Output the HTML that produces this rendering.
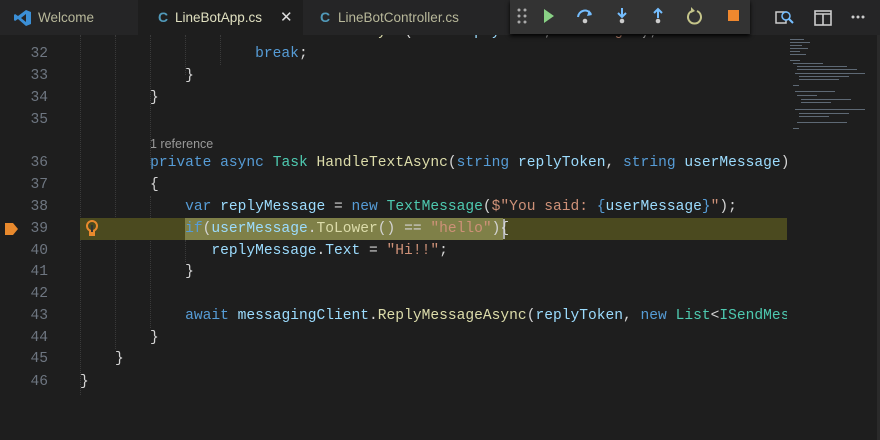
<!DOCTYPE html>
<html><head><meta charset="utf-8"><style>
body{margin:0;width:880px;height:440px;background:#1e1e1e;overflow:hidden;position:relative;font-family:"Liberation Mono",monospace;}
.tabs{position:absolute;left:0;top:0;width:880px;height:35px;background:#252526;}
.tab{position:absolute;top:0;height:35px;line-height:35px;font-family:"Liberation Sans",sans-serif;font-size:13.5px;color:#b8b89a;}
.code{position:absolute;left:0;top:0;width:787px;height:440px;overflow:hidden;}
.ln{position:absolute;left:0;width:48px;text-align:right;font-size:14.6px;color:#6e7681;}
.l{position:absolute;left:80px;white-space:pre;font-size:14.6px;color:#d4d4d4;height:22px;line-height:22px;}
.k{color:#569cd6}.t{color:#4ec9b0}.m{color:#dcdcaa}.v{color:#9cdcfe}.s{color:#ce9178}
.g{position:absolute;top:35px;width:0;height:360px;border-left:1px dotted #3a3a3a;}
</style></head><body>
<div class="code">
<div class="g" style="left:80px"></div><div class="g" style="left:115px;height:314px"></div><div class="g" style="left:150px;top:35px;height:130px"></div><div class="g" style="left:150px;top:196px;height:132px"></div><div class="g" style="left:185px;top:35px;height:40px"></div><div class="g" style="left:185px;top:240px;height:22px"></div><div class="g" style="left:220px;top:35px;height:30px"></div>
<div style="position:absolute;left:80px;top:218px;width:707px;height:22px;background:#4b4a1f"></div>
<div style="position:absolute;left:185px;top:218px;width:318px;height:22px;background:#7f8048"></div>
<div style="position:absolute;left:503px;top:219px;width:2px;height:20px;background:#aeafad"></div>
<div class="l" style="top:21px">                <span class="k">await</span> <span class="m">HandleTextAsync</span>(<span class="v">eventReplyToken</span>, <span class="s">"message"</span>);</div>
<div class="ln" style="top:43px;line-height:22px">32</div><div class="l" style="top:43px">                    <span class="k">break</span>;</div>
<div class="ln" style="top:65px;line-height:22px">33</div><div class="l" style="top:65px">            }</div>
<div class="ln" style="top:87px;line-height:22px">34</div><div class="l" style="top:87px">        }</div>
<div class="ln" style="top:109px;line-height:22px">35</div>
<div class="l" style="top:134px;font-family:'Liberation Sans',sans-serif;font-size:12.5px;color:#999;left:150px;height:20px;line-height:20px">1 reference</div>
<div class="ln" style="top:152px;line-height:22px">36</div><div class="l" style="top:152px">        <span class="k">private</span> <span class="k">async</span> <span class="t">Task</span> <span class="m">HandleTextAsync</span>(<span class="k">string</span> <span class="v">replyToken</span>, <span class="k">string</span> <span class="v">userMessage</span>)</div>
<div class="ln" style="top:174px;line-height:22px">37</div><div class="l" style="top:174px">        {</div>
<div class="ln" style="top:196px;line-height:22px">38</div><div class="l" style="top:196px">            <span class="k">var</span> <span class="v">replyMessage</span> = <span class="k">new</span> <span class="t">TextMessage</span>(<span class="s">$"You said: </span><span class="k">{</span><span class="v">userMessage</span><span class="k">}</span><span class="s">"</span>);</div>
<div class="ln" style="top:218px;line-height:22px">39</div><div class="l" style="top:218px">            <span class="k">if</span>(<span class="v">userMessage</span>.<span class="m">ToLower</span>() == <span class="s">"hello"</span>){</div>
<div class="ln" style="top:240px;line-height:22px">40</div><div class="l" style="top:240px">               <span class="v">replyMessage</span>.<span class="v">Text</span> = <span class="s">"Hi!!"</span>;</div>
<div class="ln" style="top:261px;line-height:22px">41</div><div class="l" style="top:261px">            }</div>
<div class="ln" style="top:283px;line-height:22px">42</div>
<div class="ln" style="top:305px;line-height:22px">43</div><div class="l" style="top:305px">            <span class="k">await</span> <span class="v">messagingClient</span>.<span class="m">ReplyMessageAsync</span>(<span class="v">replyToken</span>, <span class="k">new</span> <span class="t">List</span>&lt;<span class="t">ISendMessage</span>&gt;</div>
<div class="ln" style="top:327px;line-height:22px">44</div><div class="l" style="top:327px">        }</div>
<div class="ln" style="top:348px;line-height:22px">45</div><div class="l" style="top:348px">    }</div>
<div class="ln" style="top:371px;line-height:22px">46</div><div class="l" style="top:371px">}</div>
<svg style="position:absolute;left:5px;top:221px" width="14" height="16"><path d="M0 2h8l5 6-5 6H0z" fill="#e8892d"/></svg>
<svg style="position:absolute;left:86px;top:220px" width="12" height="18"><circle cx="6" cy="6" r="5" fill="none" stroke="#e8892d" stroke-width="2"/><rect x="3" y="11" width="6" height="5" fill="#e8892d"/><rect x="5" y="5" width="2" height="7" fill="#333"/></svg>
</div>
<div style="position:absolute;left:787px;top:35px;width:88px;height:405px;background:#1e1e1e">
<svg width="88" height="330">
<g fill="#7a8a9a" opacity=".7">
<rect x="3" y="4" width="14" height="1"/><rect x="3" y="7" width="20" height="1"/><rect x="3" y="10" width="12" height="1"/><rect x="3" y="13" width="18" height="1"/><rect x="3" y="16" width="10" height="1"/><rect x="3" y="19" width="16" height="1"/>
<rect x="3" y="25" width="10" height="1"/><rect x="6" y="28" width="30" height="1"/><rect x="10" y="31" width="50" height="1"/><rect x="10" y="34" width="60" height="1"/><rect x="8" y="38" width="70" height="1"/><rect x="12" y="41" width="50" height="1"/><rect x="12" y="44" width="40" height="1"/>
<rect x="6" y="50" width="6" height="1"/><rect x="8" y="56" width="40" height="1"/><rect x="10" y="60" width="20" height="1"/><rect x="14" y="64" width="50" height="1"/><rect x="14" y="67" width="30" height="1"/>
<rect x="8" y="74" width="70" height="1"/><rect x="12" y="78" width="50" height="1"/><rect x="12" y="81" width="30" height="1"/><rect x="10" y="87" width="50" height="1"/><rect x="6" y="93" width="6" height="1"/>
</g></svg>
<div style="position:absolute;right:-5px;top:0;width:3px;height:405px;background:#2a2a2a"></div>
</div>
<div class="tabs">
<div class="tab" style="left:0;width:138px;padding-left:38px;box-sizing:border-box">Welcome</div>
<svg style="position:absolute;left:14px;top:9px" width="18" height="18"><path d="M12 1l5 2v12l-5 2-8-7-3 2-1-1V6l1-1 3 2z M12 5l-5 4 5 4z" fill="#3b8fd6" fill-rule="evenodd"/></svg>
<div style="position:absolute;left:138px;top:0;width:165px;height:35px;background:#1e1e1e"></div>
<div class="tab" style="left:175px;color:#e0e0c0">LineBotApp.cs</div>
<div class="tab" style="left:280px;color:#ddd;font-size:15px">✕</div>
<div class="tab" style="left:158px;color:#519aba;font-weight:bold;font-size:14px">C</div>
<div class="tab" style="left:320px;color:#519aba;font-weight:bold;font-size:14px">C</div>
<div class="tab" style="left:338px">LineBotController.cs</div>
<div style="position:absolute;left:510px;top:0;width:240px;height:34px;background:#333333;box-shadow:0 2px 4px #000"></div>
<svg style="position:absolute;left:510px;top:0" width="240" height="34">
<g fill="#aaa"><circle cx="9" cy="10" r="1.5"/><circle cx="15" cy="10" r="1.5"/><circle cx="9" cy="16" r="1.5"/><circle cx="15" cy="16" r="1.5"/><circle cx="9" cy="22" r="1.5"/><circle cx="15" cy="22" r="1.5"/></g>
<path d="M34 9l10 7-10 7z" fill="#89d185"/>
<path d="M68 17a7 7 0 0 1 13-3" stroke="#75beff" stroke-width="2" fill="none"/><path d="M79 10l3 5-5 1z" fill="#75beff"/><circle cx="75" cy="21" r="2.3" fill="#ccc"/>
<path d="M112 8v8" stroke="#75beff" stroke-width="2"/><path d="M108 13l4 4 4-4" stroke="#75beff" stroke-width="2" fill="none"/><circle cx="112" cy="21" r="2.3" fill="#ccc"/>
<path d="M148 10v8" stroke="#75beff" stroke-width="2"/><path d="M144 13l4-4 4 4" stroke="#75beff" stroke-width="2" fill="none"/><circle cx="148" cy="21" r="2.3" fill="#ccc"/>
<path d="M182 11a6.5 6.5 0 1 0 5 0" stroke="#c5c58a" stroke-width="2" fill="none"/><path d="M181 7l4 4-4 2z" fill="#c5c58a"/>
<rect x="218" y="10" width="11" height="11" fill="#f0882e"/>
</svg>
<svg style="position:absolute;left:772px;top:6px" width="105" height="24">
<rect x="4" y="6" width="10" height="11" fill="none" stroke="#ccc" stroke-width="1.5"/><circle cx="14" cy="10" r="4" fill="#252526" stroke="#75beff" stroke-width="1.5"/><path d="M17 13l4 4" stroke="#75beff" stroke-width="2"/>
<rect x="43" y="5" width="16" height="14" fill="none" stroke="#ccc" stroke-width="1.6"/><path d="M43 8h16M51 8v11" stroke="#ccc" stroke-width="1.6"/>
<g fill="#ccc"><circle cx="81" cy="11" r="1.5"/><circle cx="86" cy="11" r="1.5"/><circle cx="91" cy="11" r="1.5"/></g>
</svg>
</div>
</body></html>
